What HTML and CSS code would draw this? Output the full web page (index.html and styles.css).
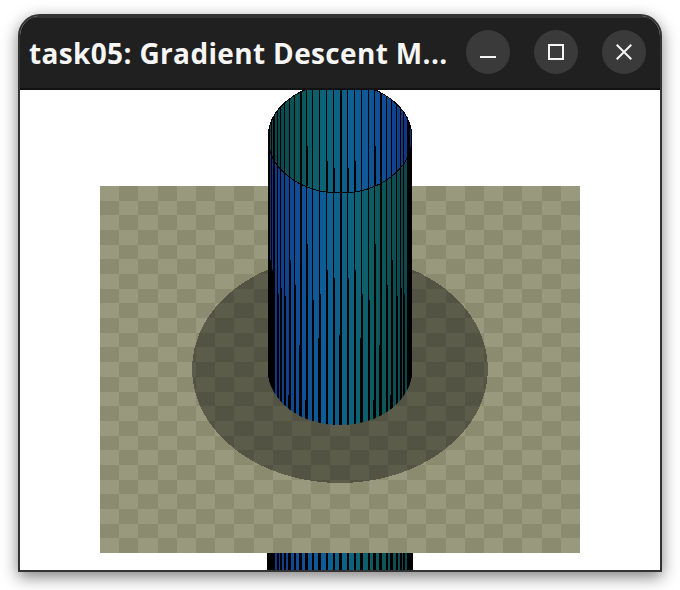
FILE: index.html
```html
<!DOCTYPE html>
<html lang="en">
<head>
<meta charset="utf-8">
<title>task05: Gradient Descent Method</title>
<link rel="stylesheet" href="styles.css">
</head>
<body>
<main class="window">
  <header class="titlebar">
    <h1 class="title">task05: Gradient Descent M...</h1>
    <div class="controls">
      <button class="control" aria-label="Minimize">
        <svg class="icon" viewBox="0 0 16 16"><path d="M0 13h16" /></svg>
      </button>
      <button class="control" aria-label="Maximize">
        <svg class="icon" viewBox="0 0 16 16"><path d="M1 1h14v14H1z" /></svg>
      </button>
      <button class="control" aria-label="Close">
        <svg class="icon" viewBox="0 0 16 16"><path d="M.7.7l14.6 14.6M15.3.7L.7 15.3" /></svg>
      </button>
    </div>
  </header>
  <svg class="scene" id="scene" width="640" height="480" viewBox="20 90 640 480" shape-rendering="crispEdges">
    <defs>
      <clipPath id="clip-strip"><rect x="267" y="553" width="146" height="17" /></clipPath>
      <clipPath id="clip-body">
        <rect x="268" y="138" width="144" height="232" />
        <ellipse cx="340" cy="370" rx="72" ry="55" />
      </clipPath>
      <clipPath id="clip-cap"><ellipse cx="340" cy="138" rx="72" ry="55" /></clipPath>
    </defs>
    <g id="strip" clip-path="url(#clip-strip)"></g>
    <g id="board"></g>
    <ellipse class="shadow" cx="340" cy="369" rx="148" ry="114" />
    <g id="body" clip-path="url(#clip-body)"></g>
    <g id="cap" clip-path="url(#clip-cap)"></g>
    <ellipse class="rim" cx="340" cy="138" rx="72" ry="55" />
  </svg>
</main>
<script src="script.js"></script>
</body>
</html>
```

FILE: styles.css
```css
* { box-sizing: border-box; }
html, body { margin: 0; height: 100%; background: #fff; overflow: hidden; }
.window {
  width: 644px;
  height: 558px;
  margin: 14px 0 0 18px;
  border: 2px solid #333;
  border-radius: 22px 22px 0 0;
  background: #fff;
  overflow: hidden;
  box-shadow: 0 5px 16px rgba(0, 0, 0, .5);
}
.titlebar {
  height: 74px;
  display: flex;
  align-items: center;
  gap: 14px;
  padding: 0 14px 2px 9px;
  background: #202020;
  border-top: 2px solid #333;
  border-bottom: 2px solid #111;
}
.title {
  flex: 1;
  min-width: 0;
  margin: 0;
  padding-top: 2px;
  color: #f6f6f6;
  font: 700 28px/36px "Open Sans", sans-serif;
  letter-spacing: .35px;
  white-space: nowrap;
}
.controls { display: flex; gap: 24px; }
.control {
  width: 44px;
  height: 44px;
  padding: 0;
  border: 0;
  border-radius: 50%;
  background: #3a3a3a;
  display: flex;
  align-items: center;
  justify-content: center;
}
.icon { width: 16px; height: 16px; fill: none; stroke: #f4f4f4; stroke-width: 2; }
.scene { display: block; }
.shadow { fill: #000; fill-opacity: .4; }
.rim { fill: none; stroke: #000; stroke-width: 1; }
```

FILE: script.js
```js
const NS = "http://www.w3.org/2000/svg";
const CX = 340, R = 72, STEP = 2 * Math.PI / 64;

function rect(parent, x, y, w, h, fill) {
  const r = document.createElementNS(NS, "rect");
  r.setAttribute("x", x); r.setAttribute("y", y);
  r.setAttribute("width", w); r.setAttribute("height", h);
  r.setAttribute("fill", fill);
  parent.appendChild(r);
}
const px = k => Math.round(CX + R * Math.sin(k * STEP));

// Colour along the wall: dark blue on one edge, teal on the other.
const STOPS = [
  [-1, [17, 48, 128]], [-0.6, [15, 78, 150]], [-0.2, [14, 94, 150]],
  [0.2, [13, 100, 122]], [0.5, [12, 90, 92]], [1, [12, 66, 72]]
];
function colour(t) {
  for (let i = 1; i < STOPS.length; i++) {
    if (t <= STOPS[i][0]) {
      const [a, ca] = STOPS[i - 1], [b, cb] = STOPS[i];
      const f = (t - a) / (b - a);
      return "rgb(" + ca.map((c, j) => Math.round(c + (cb[j] - c) * f)).join(",") + ")";
    }
  }
  return "rgb(12,66,72)";
}

function stripes(g, top, h, flip) {
  for (let k = -16; k < 16; k++) {
    const a = px(k), b = px(k + 1);
    const t = Math.sin((k + .5) * STEP);
    rect(g, a, top, b - a, h, colour(flip ? -t : t));
  }
}

// Lines widen once they pass a certain height, which differs per column.
const FRONT = { 1: 278, 2: 270, 3: 294, 4: 300, 5: 244, 7: 285, 8: 260, 9: 296, 10: 288, 11: 294, 12: 280, 13: 270, 14: 260, 15: 250 };
const WIDER = { 0: 335, 3: 338, 5: 400, 6: 345, 8: 395 };
const BACK = { 1: 168, 2: 161, 5: 146 };

function frontWall(g) {
  stripes(g, 138, 442, false);
  for (let k = -15; k <= 15; k++) {
    const x = px(k), n = Math.abs(k);
    const heavy = n % 6 === 0;
    rect(g, x, 138, heavy ? 2 : 1, 442, "#000");
    if (FRONT[n]) rect(g, x, FRONT[n], 2, 442, "#000");
    if (WIDER[n]) rect(g, x - 1, WIDER[n], 3, 442, "#000");
  }
  rect(g, 267, 138, 3, 442, "#000");
  rect(g, 410, 138, 3, 442, "#000");
  rect(g, 267, 260, 4, 320, "#000");
  rect(g, 409, 260, 4, 320, "#000");
}

function backWall(g) {
  stripes(g, 80, 120, true);
  for (let k = -15; k <= 15; k++) {
    const x = px(k), n = Math.abs(k);
    rect(g, x, 80, n % 6 === 0 ? 2 : 1, 120, "#000");
    if (BACK[n]) rect(g, x, BACK[n], 2, 40, "#000");
  }
}

const board = document.getElementById("board");
const CW = 480 / 25, CH = 367 / 25;
for (let r = 0; r < 25; r++) {
  for (let c = 0; c < 25; c++) {
    const x0 = Math.round(100 + c * CW), x1 = Math.round(100 + (c + 1) * CW);
    const y0 = Math.round(186 + r * CH), y1 = Math.round(186 + (r + 1) * CH);
    rect(board, x0, y0, x1 - x0, y1 - y0, (r + c) % 2 ? "#8b8b70" : "#99997d");
  }
}
frontWall(document.getElementById("strip"));
frontWall(document.getElementById("body"));
backWall(document.getElementById("cap"));
```
